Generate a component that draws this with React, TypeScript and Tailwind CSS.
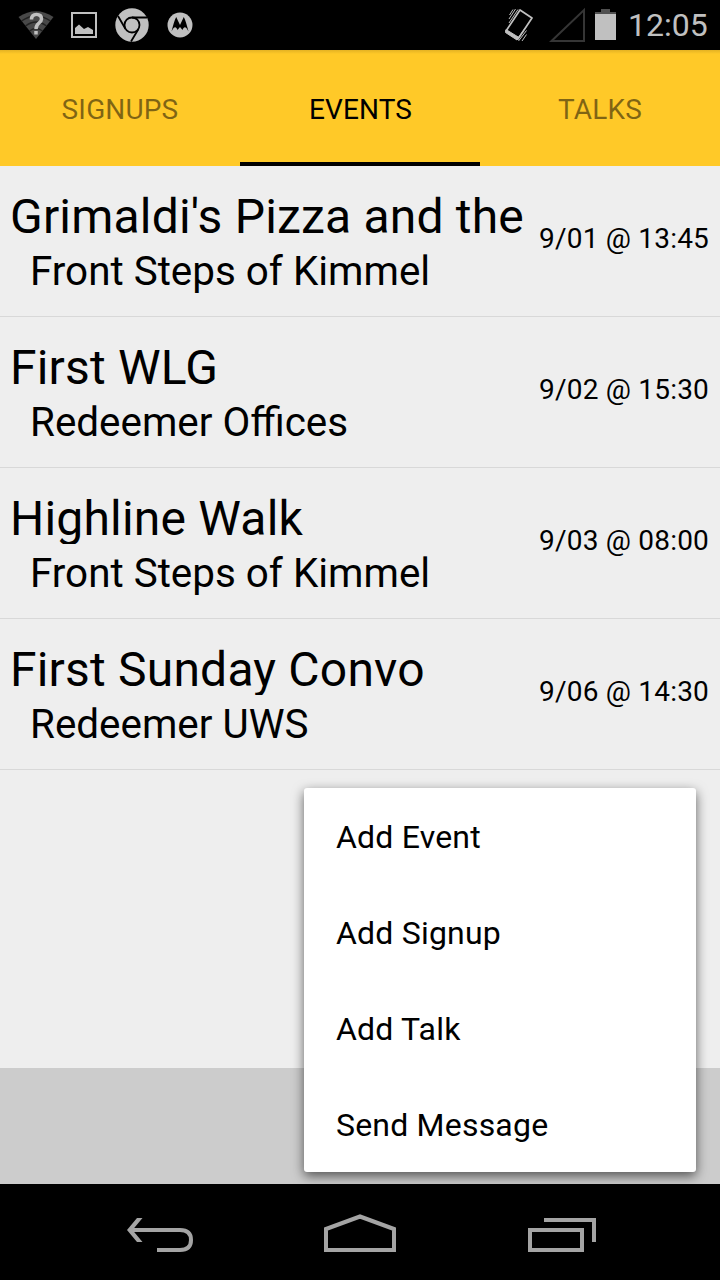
const events = [
  { title: "Grimaldi's Pizza and the", place: 'Front Steps of Kimmel', time: '9/01 @ 13:45' },
  { title: 'First WLG', place: 'Redeemer Offices', time: '9/02 @ 15:30' },
  { title: 'Highline Walk', place: 'Front Steps of Kimmel', time: '9/03 @ 08:00' },
  { title: 'First Sunday Convo', place: 'Redeemer UWS', time: '9/06 @ 14:30' },
];

const actions = ['Add Event', 'Add Signup', 'Add Talk', 'Send Message'];

function StatusBar() {
  return (
    <header className="flex h-[50px] shrink-0 items-center bg-black pr-[13px] pl-[18px] text-[#c0c0c0]">
      <svg width="36" height="50" viewBox="18 0 36 50" fill="none">
        <path d="M18.500 17Q36 5.500 53.500 17L36 39Z" fill="#484848" />
        <path d="M21.500 21Q36 11 50.500 21M25.500 26Q36 18 46.500 26M29.500 31Q36 26 42.500 31" stroke="#222" strokeWidth="1.500" />
        <path d="M31.500 19.500Q31.500 14.500 36.500 14.500Q41.500 14.500 41.500 19Q41.500 21 39 23Q36 25.500 36 29M36 31V34.500" stroke="currentColor" strokeWidth="3.500" />
      </svg>
      <svg className="ml-[17px]" width="26" height="50" viewBox="71 0 26 50">
        <path d="M72 13H96V37H72Z" fill="none" stroke="currentColor" strokeWidth="2" />
        <path d="M75 34V28L79 24.500L84 29L88 27L93 30V34Z" fill="currentColor" />
      </svg>
      <svg className="ml-[18px]" width="34" height="50" viewBox="115 0 34 50">
        <circle cx="132" cy="25" r="16.700" fill="currentColor" />
        <circle cx="132" cy="25" r="7.500" fill="currentColor" stroke="#000" strokeWidth="1.800" />
        <path d="M132 17.500H147M125.500 29L118 16M138.500 29L131 41.500" fill="none" stroke="#000" strokeWidth="1.800" />
      </svg>
      <svg className="ml-[18px]" width="26" height="50" viewBox="167 0 26 50">
        <circle cx="180" cy="25" r="12.500" fill="currentColor" />
        <path d="M171.500 31.500C173 26 174.500 20 176.200 17L180 25L183.800 17C185.500 20 187 26 188.500 31.500C186 26 184 26 182.500 30L180 27L177.500 30C176 26 174 26 171.500 31.500Z" fill="#000" />
      </svg>
      <svg className="ml-auto" width="30" height="50" viewBox="504 0 30 50" fill="none" stroke="currentColor">
        <path d="M520 10L532 18L518 39L506 31Z" strokeWidth="1.700" strokeLinejoin="round" />
        <path d="M506 29.500L519 37.500L517 40L505.500 32.500Z" fill="currentColor" strokeWidth="1" />
        <path d="M509 19L515.500 9M509.500 15L513 9.500M509 23L518 9.500M526.500 30.500L518.500 41M526.500 34.500L522 41M526 27L516.500 40" strokeWidth="1" />
      </svg>
      <svg className="ml-[15px]" width="36" height="50" viewBox="549 0 36 50">
        <path d="M551.500 41L584 10V41Z" fill="none" stroke="#353535" strokeWidth="2" />
      </svg>
      <svg className="ml-[10px]" width="22" height="50" viewBox="595 0 22 50">
        <path d="M595 12H601V9H610V12H616V15H595Z" fill="#505050" />
        <path d="M595 14H616V40H595Z" fill="currentColor" />
      </svg>
      <span className="ml-[11px] w-[79px] text-[32px] leading-none whitespace-nowrap">12:05</span>
    </header>
  );
}

export default function App() {
  return (
    <main className="relative flex h-[1280px] w-[720px] flex-col overflow-hidden bg-[#eee] font-[Roboto,sans-serif] text-black">
      <StatusBar />
      <nav className="grid h-[116px] shrink-0 grid-cols-3 bg-[#ffc928] bg-[linear-gradient(#e4b223,#ffc928_4px)] text-[28px] tracking-[0.15px]">
        <div className="flex items-center justify-center pt-[3px] text-black/50">SIGNUPS</div>
        <div className="flex items-center justify-center border-y-4 border-t-transparent border-b-black pt-[3px] pl-px">EVENTS</div>
        <div className="flex items-center justify-center pt-[3px] text-black/50">TALKS</div>
      </nav>
      <ul className="flex-1">
        {events.map((event) => (
          <li key={event.time} className="flex h-[151px] items-center justify-between border-b border-[#d8d8d8] pr-[11px] pl-[10px]">
            <div className="self-start pt-[23px]">
              <h2 className="h-[53px] overflow-hidden text-[48px] leading-[56px] tracking-[0.2px] whitespace-nowrap">{event.title}</h2>
              <p className="pl-5 text-[40.4px] leading-[60px] whitespace-nowrap">{event.place}</p>
            </div>
            <time className="pb-1 text-[28px] tracking-[0.2px] whitespace-nowrap">{event.time}</time>
          </li>
        ))}
      </ul>
      <div className="h-[116px] shrink-0 bg-[#ccc]" />
      <div className="absolute top-[788px] left-[304px] flex h-[384px] w-[392px] flex-col rounded-[3px] bg-white shadow-[0_4px_12px_rgba(0,0,0,0.6)]">
        {actions.map((action) => (
          <button key={action} className="flex h-24 items-center px-8 pt-0.5 text-left text-[32px] tracking-[0.2px]">{action}</button>
        ))}
      </div>
      <footer className="relative grid h-24 shrink-0 grid-cols-[1fr_200px_1fr] bg-black text-[#a4a4a4]">
        <svg className="ml-[126px]" width="70" height="96" viewBox="126 1184 70 96" fill="none" stroke="currentColor" strokeWidth="4">
          <path d="M129 1230H180Q191 1230 191 1240Q191 1250 180 1250H157" />
          <path d="M127 1230L137 1218H142.500L132.500 1230L142.500 1242H137Z" fill="currentColor" stroke="none" />
        </svg>
        <svg className="mx-auto" width="76" height="96" viewBox="322 1184 76 96" fill="none" stroke="currentColor" strokeWidth="4">
          <path d="M326 1250V1229L360 1216.500L394 1229V1250Z" />
        </svg>
        <svg className="ml-[66px]" width="72" height="96" viewBox="526 1184 72 96" fill="none" stroke="currentColor" strokeWidth="4">
          <path d="M530 1230H582V1250H530ZM544 1220H594V1242" />
        </svg>
      </footer>
    </main>
  );
}
